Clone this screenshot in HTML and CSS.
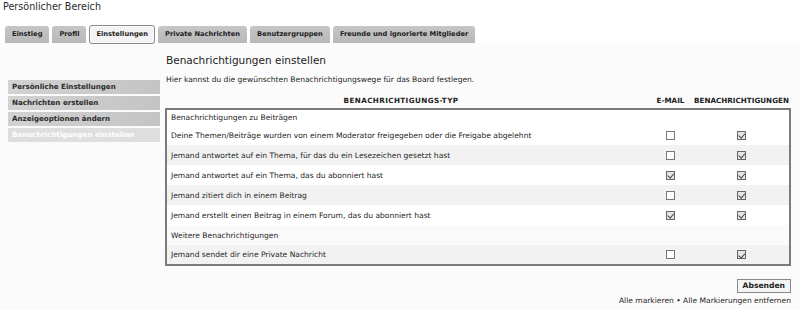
FILE: index.html
```html
<!DOCTYPE html>
<html lang="de">
<head>
<meta charset="utf-8">
<title>Persönlicher Bereich</title>
<link rel="stylesheet" href="styles.css">
</head>
<body>
<h1 class="page-title">Persönlicher Bereich</h1>
<ul class="tabs">
  <li class="tab">Einstieg</li>
  <li class="tab">Profil</li>
  <li class="tab active">Einstellungen</li>
  <li class="tab">Private Nachrichten</li>
  <li class="tab">Benutzergruppen</li>
  <li class="tab">Freunde und ignorierte Mitglieder</li>
</ul>
<div class="panel">
  <ul class="side">
    <li class="side-item">Persönliche Einstellungen</li>
    <li class="side-item">Nachrichten erstellen</li>
    <li class="side-item">Anzeigeoptionen ändern</li>
    <li class="side-item current">Benachrichtigungen einstellen</li>
  </ul>
  <div class="main">
    <h2 class="heading">Benachrichtigungen einstellen</h2>
    <p class="desc">Hier kannst du die gewünschten Benachrichtigungswege für das Board festlegen.</p>
    <div class="thead">
      <span class="th-type">BENACHRICHTIGUNGS-TYP</span>
      <span class="th-mail">E-MAIL</span>
      <span class="th-notif">BENACHRICHTIGUNGEN</span>
    </div>
    <div class="box">
      <div class="row first"><span class="label">Benachrichtigungen zu Beiträgen</span></div>
      <div class="row"><span class="label">Deine Themen/Beiträge wurden von einem Moderator freigegeben oder die Freigabe abgelehnt</span><span class="c1"><span class="cb"></span></span><span class="c2"><span class="cb on"></span></span></div>
      <div class="row alt"><span class="label">Jemand antwortet auf ein Thema, für das du ein Lesezeichen gesetzt hast</span><span class="c1"><span class="cb"></span></span><span class="c2"><span class="cb on"></span></span></div>
      <div class="row"><span class="label">Jemand antwortet auf ein Thema, das du abonniert hast</span><span class="c1"><span class="cb on"></span></span><span class="c2"><span class="cb on"></span></span></div>
      <div class="row alt"><span class="label">Jemand zitiert dich in einem Beitrag</span><span class="c1"><span class="cb"></span></span><span class="c2"><span class="cb on"></span></span></div>
      <div class="row"><span class="label">Jemand erstellt einen Beitrag in einem Forum, das du abonniert hast</span><span class="c1"><span class="cb on"></span></span><span class="c2"><span class="cb on"></span></span></div>
      <div class="row soft"><span class="label">Weitere Benachrichtigungen</span></div>
      <div class="row alt last"><span class="label">Jemand sendet dir eine Private Nachricht</span><span class="c1"><span class="cb"></span></span><span class="c2"><span class="cb on"></span></span></div>
    </div>
    <div class="actions">
      <button class="submit" type="button">Absenden</button>
      <p class="marks">Alle markieren • Alle Markierungen entfernen</p>
    </div>
  </div>
</div>
</body>
</html>
```
FILE: styles.css
```css
* { box-sizing: border-box; }
html, body { margin: 0; padding: 0; }
body {
  width: 800px;
  height: 310px;
  overflow: hidden;
  background: #fff;
  font-family: "DejaVu Sans", Verdana, sans-serif;
  font-size: 7.55px;
  color: #222;
}
.page-title {
  margin: 0;
  padding: 1px 0 0 3px;
  font-size: 9.6px;
  font-weight: normal;
  height: 25px;
  color: #2a2a2a;
}
.tabs {
  list-style: none;
  margin: 0;
  padding: 0 0 0 5px;
  display: flex;
  gap: 3px;
  height: 18px;
  align-items: flex-end;
}
.tab {
  height: 17px;
  padding: 0 7px;
  line-height: 17px;
  font-weight: bold;
  font-size: 6.7px;
  color: #222;
  background: linear-gradient(#c6c6c6, #b8b8b8);
  border-radius: 3px 3px 0 0;
}
.tab.active {
  height: 19px;
  line-height: 17px;
  margin-bottom: -1px;
  background: #f3f3f3;
  border: 1px solid #8a8a8a;
  border-radius: 3px;
  box-shadow: inset 0 0 0 1px #fff;
  padding: 0 6px;
}
.panel {
  background: #fbfbfb;
  display: flex;
  height: 267px;
  padding-top: 10px;
}
.side {
  list-style: none;
  margin: 27px 0 0 8px;
  padding: 0;
  width: 152px;
  display: flex;
  flex-direction: column;
  gap: 2px;
}
.side-item {
  height: 14px;
  line-height: 14px;
  padding-left: 4px;
  font-weight: bold;
  font-size: 7.1px;
  color: #2a2a2a;
  background: linear-gradient(90deg, #d2d2d2, #c4c4c4);
}
.side-item.current {
  background: #dedede;
  color: #fff;
}
.main {
  margin-left: 5px;
  width: 626px;
  display: flex;
  flex-direction: column;
}
.heading {
  margin: 0;
  font-size: 10.5px;
  font-weight: normal;
  color: #222;
  height: 22px;
  line-height: 14px;
  padding-left: 1px;
}
.desc {
  margin: 0;
  height: 23px;
  line-height: 10px;
  padding-left: 1px;
}
.thead {
  display: flex;
  height: 10px;
  line-height: 10px;
  font-weight: bold;
  font-size: 7.2px;
  margin-top: -2px;
  padding: 0 2px;
}
.th-type { flex: 1; display: flex; justify-content: center; white-space: nowrap; letter-spacing: 0.4px; }
.th-mail { width: 71px; display: flex; justify-content: center; white-space: nowrap; }
.th-notif { width: 71px; margin-right: 12px; display: flex; justify-content: center; white-space: nowrap; }
.box {
  margin-top: 2px;
  border: 2px solid #7b7b7b;
  background: #fff;
}
.row {
  display: flex;
  align-items: center;
  height: 20px;
  padding-left: 4px;
}
.row.first { height: 15px; }
.row.last { height: 19px; }
.row.alt { background: #f2f2f2; }
.row.soft { background: #fafafa; }
.label { flex: 1; }
.c1 { width: 71px; display: flex; justify-content: center; }
.c2 { width: 71px; display: flex; justify-content: center; margin-right: 12px; }
.cb {
  width: 9px;
  height: 9px;
  border: 1px solid #777;
  background: #fff;
  position: relative;
}
.cb.on {
  background: #e6e6e6;
  border-color: #666;
}
.cb.on::after {
  content: "";
  position: absolute;
  left: 2px;
  top: 0.5px;
  width: 2.5px;
  height: 4.5px;
  border: solid #444;
  border-width: 0 1px 1px 0;
  transform: rotate(40deg);
}
.actions {
  display: flex;
  flex-direction: column;
  align-items: flex-end;
  margin-top: 13px;
}
.submit {
  font-family: "DejaVu Sans", Verdana, sans-serif;
  font-size: 7.6px;
  font-weight: bold;
  color: #222;
  background: #f4f4f4;
  border: 1px solid #888;
  padding: 0 5px;
  height: 14px;
  line-height: 12px;
  margin: 0;
}
.marks {
  margin: 3px 0 0 0;
}
```
